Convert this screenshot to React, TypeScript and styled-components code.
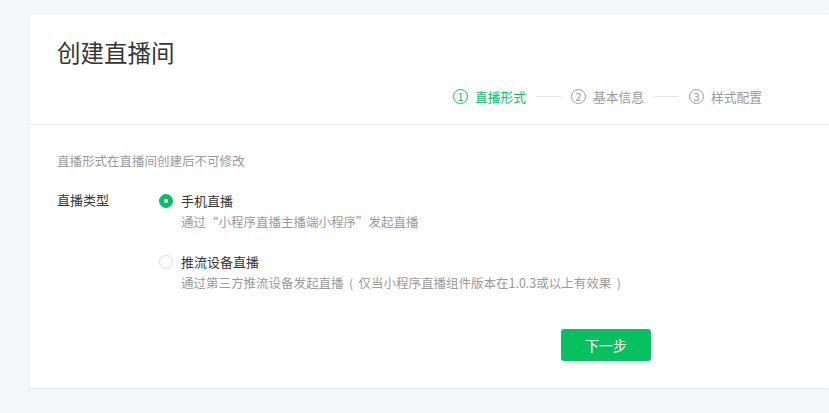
import styled, { createGlobalStyle } from "styled-components";

const GlobalStyle = createGlobalStyle`
    html, body {
        margin: 0;
        padding: 0;
        background: #f6f7f9;
        overflow: hidden;
        font-family: "Noto Sans CJK SC", "Noto Sans", sans-serif;
    }
`;

const Page = styled.div`
    width: 829px;
    height: 413px;
    padding: 15px 0 0 30px;
    box-sizing: border-box;
`;

const Card = styled.div`
    width: 800px;
    height: 373px;
    background: #fff;
    border-radius: 4px;
    box-shadow: 0 1px 2px rgba(0, 0, 0, 0.08);
    display: flex;
    flex-direction: column;
`;

const Header = styled.div`
    padding: 21px 27px 18px;
    border-bottom: 1px solid #e7e7e7;
`;

const Title = styled.h1`
    margin: 0;
    font-size: 23.5px;
    line-height: 32px;
    font-weight: normal;
    color: #353535;
`;

const Steps = styled.div`
    display: flex;
    align-items: center;
    height: 20px;
    margin-top: 18px;
    padding-left: 396px;
    gap: 10px;
`;

const Step = styled.div<{ $active?: boolean }>`
    display: flex;
    align-items: center;
    gap: 7px;
    font-size: 12.75px;
    color: ${(p) => (p.$active ? "#07c160" : "#9a9a9a")};
`;

const StepNum = styled.span`
    width: 13px;
    height: 13px;
    border: 1px solid currentColor;
    border-radius: 50%;
    display: flex;
    align-items: center;
    justify-content: center;
    font-size: 11px;
    line-height: 1;
`;

const StepLine = styled.span`
    width: 25px;
    height: 1px;
    background: #e5e5e5;
`;

const Body = styled.div`
    padding: 26px 27px 0;
`;

const Hint = styled.p`
    margin: 0;
    font-size: 12.5px;
    line-height: 20px;
    color: #9a9a9a;
`;

const FormRow = styled.div`
    display: flex;
    margin-top: 20px;
`;

const FormLabel = styled.div`
    width: 102px;
    font-size: 13px;
    line-height: 18px;
    color: #353535;
`;

const Options = styled.div`
    display: flex;
    flex-direction: column;
    gap: 20px;
`;

const Option = styled.label`
    display: flex;
    gap: 8px;
    cursor: pointer;
`;

const Radio = styled.span<{ $checked?: boolean }>`
    width: 14px;
    height: 14px;
    margin-top: 3px;
    box-sizing: border-box;
    border-radius: 50%;
    border: 1px solid ${(p) => (p.$checked ? "#07c160" : "#dcdcdc")};
    background: ${(p) => (p.$checked ? "#07c160" : "#fff")};
    display: flex;
    align-items: center;
    justify-content: center;
    flex: none;

    &::after {
        content: "";
        width: 4px;
        height: 4px;
        border-radius: 50%;
        background: #fff;
        display: ${(p) => (p.$checked ? "block" : "none")};
    }
`;

const OptionText = styled.div`
    display: flex;
    flex-direction: column;
    gap: 1px;
`;

const OptionTitle = styled.span`
    font-size: 13px;
    line-height: 20px;
    color: #353535;
`;

const OptionDesc = styled.span`
    font-size: 12.5px;
    line-height: 20px;
    color: #9a9a9a;
`;

/* full-width bracket, glyph centred in its box like the reference font */
const Paren = styled.span`
    display: inline-block;
    width: 1.2em;
    text-align: center;
`;

const Footer = styled.div`
    display: flex;
    padding: 36px 0 0 504px;
`;

const Button = styled.button`
    width: 90px;
    height: 32px;
    border: none;
    border-radius: 3px;
    background: #07c160;
    color: #fff;
    font-family: inherit;
    font-size: 14px;
    cursor: pointer;
`;

const steps = ["直播形式", "基本信息", "样式配置"];

export default function App() {
    return (
        <Page>
            <GlobalStyle />
            <Card>
                <Header>
                    <Title>创建直播间</Title>
                    <Steps>
                        {steps.map((s, i) => [
                            i > 0 && <StepLine key={"l" + i} />,
                            <Step key={s} $active={i === 0}>
                                <StepNum>{i + 1}</StepNum>
                                {s}
                            </Step>,
                        ])}
                    </Steps>
                </Header>
                <Body>
                    <Hint>直播形式在直播间创建后不可修改</Hint>
                    <FormRow>
                        <FormLabel>直播类型</FormLabel>
                        <Options>
                            <Option>
                                <Radio $checked />
                                <OptionText>
                                    <OptionTitle>手机直播</OptionTitle>
                                    <OptionDesc>
                                        通过“小程序直播主播端小程序”发起直播
                                    </OptionDesc>
                                </OptionText>
                            </Option>
                            <Option>
                                <Radio />
                                <OptionText>
                                    <OptionTitle>推流设备直播</OptionTitle>
                                    <OptionDesc>
                                        通过第三方推流设备发起直播
                                        <Paren>(</Paren>
                                        仅当小程序直播组件版本在1.0.3或以上有效果
                                        <Paren>)</Paren>
                                    </OptionDesc>
                                </OptionText>
                            </Option>
                        </Options>
                    </FormRow>
                    <Footer>
                        <Button>下一步</Button>
                    </Footer>
                </Body>
            </Card>
        </Page>
    );
}
